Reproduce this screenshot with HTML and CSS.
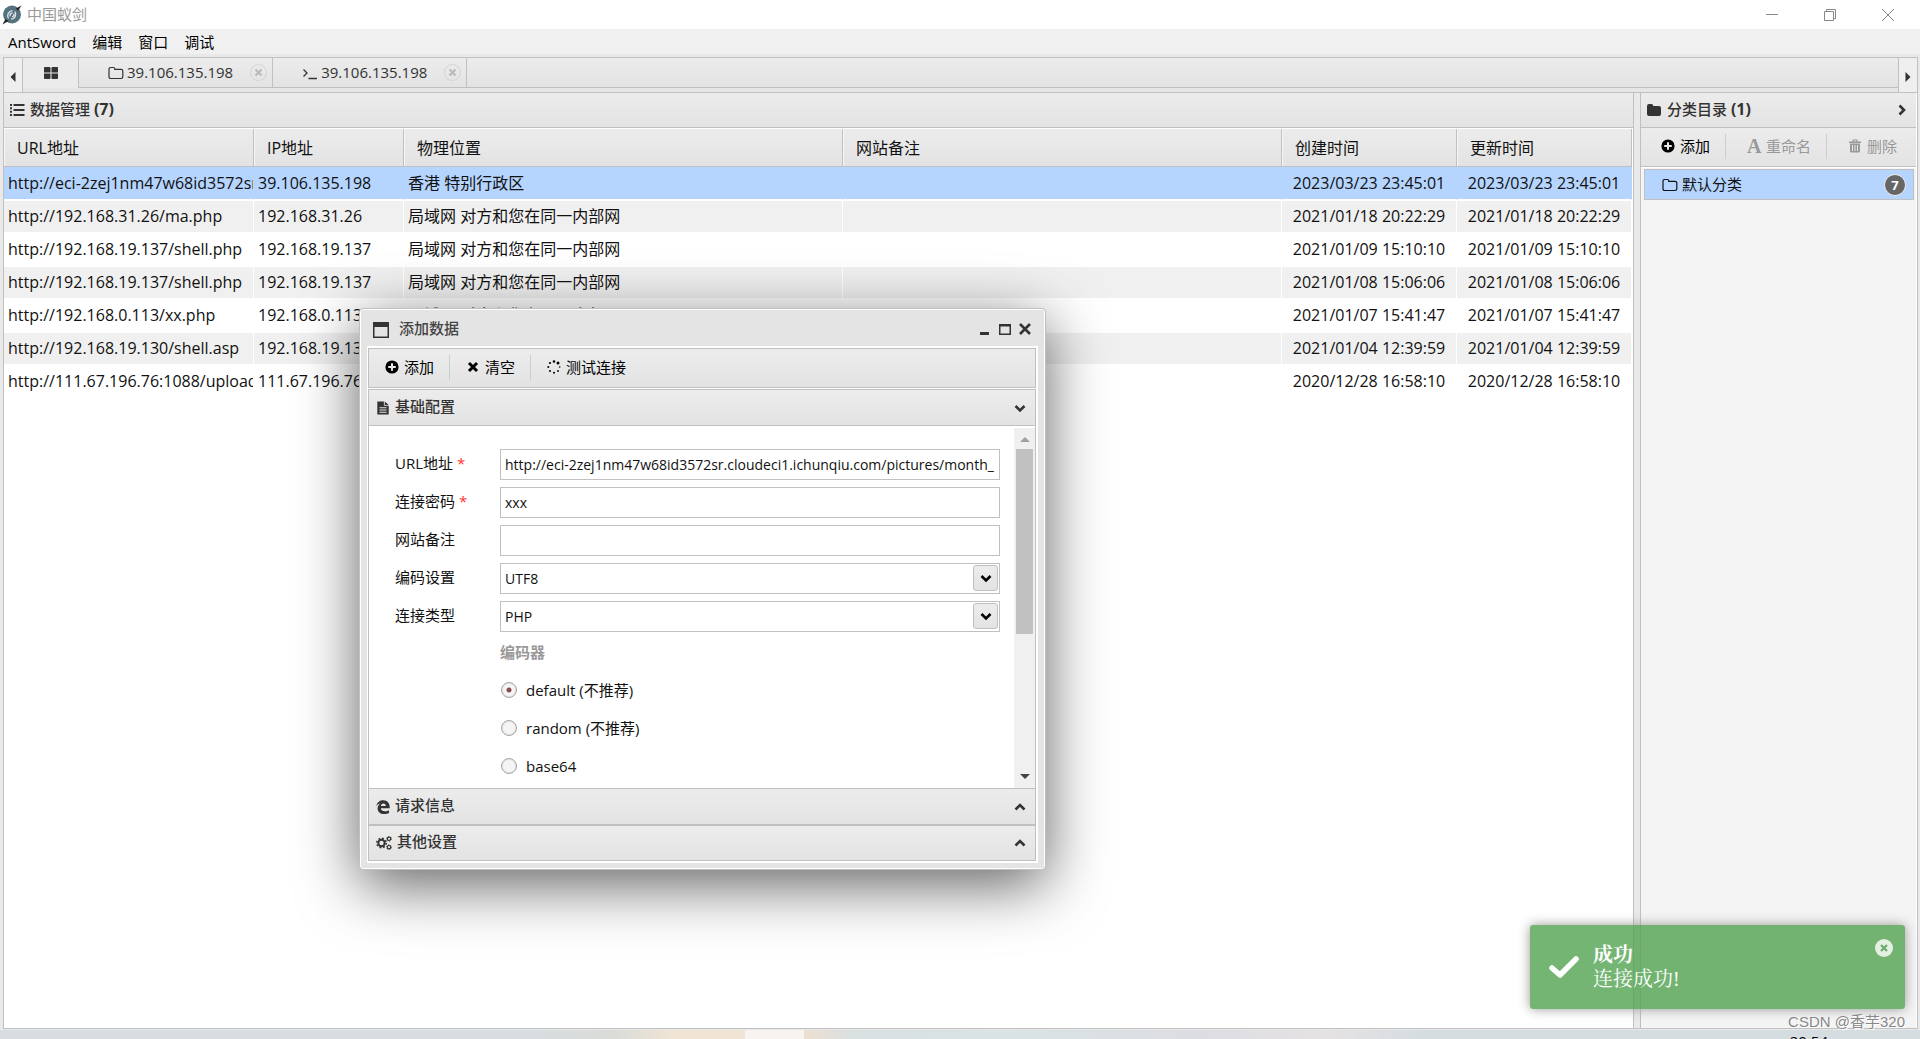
FILE: index.html
```html
<!DOCTYPE html>
<html lang="zh-CN">
<head>
<meta charset="utf-8">
<meta name="viewport" content="width=device-width, initial-scale=1">
<title>中国蚁剑</title>
<link rel="stylesheet" href="styles.css">
</head>
<body>
<svg class="sprite" aria-hidden="true">
  <symbol id="i-folder-o" viewBox="0 0 16 14"><path d="M1 3.2Q1 1.5 2.7 1.5H5.3Q6.8 1.5 6.8 3V3.3H13Q14.8 3.3 14.8 5V10.8Q14.8 12.5 13 12.5H2.7Q1 12.5 1 10.8Z" fill="none" stroke="currentColor" stroke-width="1.2"/></symbol>
  <symbol id="i-folder" viewBox="0 0 16 14"><path d="M1 3Q1 1 3 1H5.3Q7.3 1 7.3 3H13Q15 3 15 5V11Q15 13 13 13H3Q1 13 1 11Z"/></symbol>
  <symbol id="i-plus" viewBox="0 0 14 14"><path fill-rule="evenodd" d="M7 .4A6.6 6.6 0 1 0 7 13.600A6.600 6.600 0 1 0 7 .4ZM6 3.200H8V6H10.800V8H8V10.800H6V8H3.200V6H6Z"/></symbol>
  <symbol id="i-times" viewBox="0 0 12 12"><path d="M2 2L10 10M10 2L2 10" fill="none" stroke="currentColor" stroke-width="3"/></symbol>
  <symbol id="i-down" viewBox="0 0 12 12"><path d="M1.500 4L6 8.500L10.500 4" fill="none" stroke="currentColor" stroke-width="2.600"/></symbol>
  <symbol id="i-up" viewBox="0 0 12 12"><path d="M1.500 8.500L6 4L10.500 8.500" fill="none" stroke="currentColor" stroke-width="2.600"/></symbol>
  <symbol id="i-right" viewBox="0 0 12 12"><path d="M3.500 1.500L8 6L3.500 10.500" fill="none" stroke="currentColor" stroke-width="2.600"/></symbol>
</svg>

<header class="titlebar">
  <svg class="logo" viewBox="0 0 20 20"><circle cx="10" cy="9.500" r="9" fill="#56727f"/><path d="M6.500 13.500C4.500 10 6.500 6 10.500 5.600M12.800 6.500C15 10 12.800 14 9 14.200M8.400 11.400C7.400 9.500 8.700 8 10.600 8.200M11.800 8.800C12.400 10.400 11.500 11.600 10 11.700" fill="none" stroke="#dfe8ec" stroke-width="1.300"/><path d="M.5 19.500L3.500 14L6.500 16ZM19.500 .5L14 3.500L16 6Z" fill="#222"/></svg>
  <h1 class="app-name">中国蚁剑</h1>
  <div class="win-controls">
    <button aria-label="最小化"><svg viewBox="0 0 14 14"><path d="M1 6.500H13"/></svg></button>
    <button aria-label="还原"><svg viewBox="0 0 14 14"><path d="M1.500 3.500H10.500V12.500H1.500ZM3.500 3.500V1.500H12.500V10.500H10.500"/></svg></button>
    <button aria-label="关闭"><svg viewBox="0 0 14 14"><path d="M1 1L13 13M13 1L1 13"/></svg></button>
  </div>
</header>

<nav class="menubar">
  <button>AntSword</button><button>编辑</button><button>窗口</button><button>调试</button>
</nav>

<div class="app">
  <div class="tabbar">
    <button class="tab-arrow" aria-label="向左"><svg viewBox="0 0 6 10"><path d="M5.500 0V10L.5 5Z"/></svg></button>
    <button class="tab tab-home" aria-label="主页"><svg viewBox="0 0 14 12"><path d="M1 0H5.500Q6.500 0 6.500 1V5.500H0V1Q0 0 1 0ZM8.500 0H13Q14 0 14 1V5.500H7.500V1Q7.500 0 8.500 0ZM0 6.500H6.500V11Q6.500 12 5.500 12H1Q0 12 0 11ZM7.500 6.500H14V11Q14 12 13 12H8.500Q7.500 12 7.500 11Z"/></svg></button>
    <div class="tab"><svg class="ic16"><use href="#i-folder-o"/></svg><span>39.106.135.198</span><button class="tab-close" aria-label="关闭标签"><svg><use href="#i-times"/></svg></button></div>
    <div class="tab"><svg class="ic16" viewBox="0 0 16 14"><path d="M1.500 3.500L5 7L1.500 10.500M6.500 12.500H15" fill="none" stroke="currentColor" stroke-width="1.300"/></svg><span>39.106.135.198</span><button class="tab-close" aria-label="关闭标签"><svg><use href="#i-times"/></svg></button></div>
    <div class="tab-fill"></div>
    <button class="tab-arrow tab-arrow-end" aria-label="向右"><svg viewBox="0 0 6 10"><path d="M.5 0V10L5.500 5Z"/></svg></button>
  </div>

  <div class="panes">
    <main class="pane">
      <h2 class="pane-head"><svg class="ic16" viewBox="0 0 16 14"><path d="M1 1H3V3H1ZM1 4.300H3V6.300H1ZM1 7.700H3V9.700H1ZM1 11H3V13H1ZM4.500 1H15.500V3H4.500ZM4.500 6H15.500V8H4.500ZM4.500 11H15.500V13H4.500Z"/></svg><span>数据管理 <b>(7)</b></span></h2>
      <div class="grid">
        <table>
          <colgroup><col class="c-url"><col class="c-ip"><col><col><col class="c-time"><col class="c-time"></colgroup>
          <thead><tr><th>URL地址</th><th>IP地址</th><th>物理位置</th><th>网站备注</th><th>创建时间</th><th>更新时间</th></tr></thead>
          <tbody>
            <tr class="selected"><td>http://eci-2zej1nm47w68id3572sr.cloudeci1.ichunqiu.com</td><td>39.106.135.198</td><td>香港 特别行政区</td><td></td><td>2023/03/23 23:45:01</td><td>2023/03/23 23:45:01</td></tr>
            <tr><td>http://192.168.31.26/ma.php</td><td>192.168.31.26</td><td>局域网 对方和您在同一内部网</td><td></td><td>2021/01/18 20:22:29</td><td>2021/01/18 20:22:29</td></tr>
            <tr><td>http://192.168.19.137/shell.php</td><td>192.168.19.137</td><td>局域网 对方和您在同一内部网</td><td></td><td>2021/01/09 15:10:10</td><td>2021/01/09 15:10:10</td></tr>
            <tr><td>http://192.168.19.137/shell.php</td><td>192.168.19.137</td><td>局域网 对方和您在同一内部网</td><td></td><td>2021/01/08 15:06:06</td><td>2021/01/08 15:06:06</td></tr>
            <tr><td>http://192.168.0.113/xx.php</td><td>192.168.0.113</td><td>局域网 对方和您在同一内部网</td><td></td><td>2021/01/07 15:41:47</td><td>2021/01/07 15:41:47</td></tr>
            <tr><td>http://192.168.19.130/shell.asp</td><td>192.168.19.130</td><td></td><td></td><td>2021/01/04 12:39:59</td><td>2021/01/04 12:39:59</td></tr>
            <tr><td>http://111.67.196.76:1088/upload</td><td>111.67.196.76</td><td></td><td></td><td>2020/12/28 16:58:10</td><td>2020/12/28 16:58:10</td></tr>
          </tbody>
        </table>
      </div>
    </main>

    <aside class="pane side">
      <h2 class="pane-head"><svg class="ic16"><use href="#i-folder"/></svg><span>分类目录 <b>(1)</b></span><svg class="chev"><use href="#i-right"/></svg></h2>
      <div class="toolbar side-tools">
        <button><svg class="ic14"><use href="#i-plus"/></svg>添加</button>
        <button disabled><b class="font-icon">A</b>重命名</button>
        <button disabled><svg class="ic14" viewBox="0 0 14 14"><path fill-rule="evenodd" d="M1 2.500H4L5 .5H9L10 2.500H13V4H1ZM5.500 2.500H8.500L8 1.500H6ZM2 4.500H12V12Q12 13.500 10.500 13.500H3.500Q2 13.500 2 12ZM4 6V12H5V6ZM6.500 6V12H7.500V6ZM9 6V12H10V6Z"/></svg>删除</button>
      </div>
      <ul class="cats">
        <li><svg class="ic16"><use href="#i-folder-o"/></svg><span>默认分类</span><b class="badge">7</b></li>
      </ul>
    </aside>
  </div>
</div>

<footer class="desktop"><span>20:54</span></footer>

<section class="dialog" aria-label="添加数据">
  <div class="dlg-head">
    <svg class="ic16" viewBox="0 0 16 16"><path fill-rule="evenodd" d="M0 0H16V16H0ZM1.500 5V14.500H14.500V5Z"/></svg>
    <h2>添加数据</h2>
    <button aria-label="最小化"><svg viewBox="0 0 12 12"><path d="M1 9H10V12H1Z"/></svg></button>
    <button aria-label="最大化"><svg viewBox="0 0 12 12"><path fill-rule="evenodd" d="M0 1H12V12H0ZM1.500 3.500V10.500H10.500V3.500Z"/></svg></button>
    <button aria-label="关闭"><svg viewBox="0 0 12 12"><path d="M1 1L11 11M11 1L1 11" stroke="currentColor" stroke-width="2.600"/></svg></button>
  </div>
  <div class="dlg-body">
    <div class="toolbar dlg-tools">
      <button><svg class="ic14"><use href="#i-plus"/></svg>添加</button>
      <button><svg class="ic14" viewBox="0 0 14 14"><path d="M3 3L11 11M11 3L3 11" stroke="currentColor" stroke-width="3"/></svg>清空</button>
      <button><svg class="ic14" viewBox="0 0 14 14"><circle cx="7" cy="1.500" r="1.300"/><circle cx="11" cy="3" r="1.500"/><circle cx="12.700" cy="7" r=".8"/><circle cx="11" cy="11" r=".9"/><circle cx="7" cy="12.700" r="1"/><circle cx="3" cy="11" r="1"/><circle cx="1.300" cy="7" r="1"/><circle cx="3" cy="3" r="1.100"/></svg>测试连接</button>
    </div>
    <div class="accordion">
      <h3><svg class="ic14" viewBox="0 0 14 16"><path fill-rule="evenodd" d="M.5 .5H8V5.500H13.500V15.500H.5ZM9 .5L13.500 4.500H9ZM3 7V8.200H11V7ZM3 9.700V10.900H11V9.700ZM3 12.300V13.500H11V12.300Z"/></svg><span>基础配置</span><svg class="chev"><use href="#i-down"/></svg></h3>
      <div class="scroll">
        <form class="form">
          <div class="field"><label for="url">URL地址 <i>*</i></label><input id="url" type="text" value="http://eci-2zej1nm47w68id3572sr.cloudeci1.ichunqiu.com/pictures/month_"></div>
          <div class="field"><label for="pwd">连接密码 <i>*</i></label><input id="pwd" type="text" value="xxx"></div>
          <div class="field"><label for="note">网站备注</label><input id="note" type="text"></div>
          <div class="field"><label for="enc">编码设置</label><span class="combo"><select id="enc"><option>UTF8</option></select><span class="combo-btn"><svg><use href="#i-down"/></svg></span></span></div>
          <div class="field"><label for="type">连接类型</label><span class="combo"><select id="type"><option>PHP</option></select><span class="combo-btn"><svg><use href="#i-down"/></svg></span></span></div>
          <fieldset>
            <legend>编码器</legend>
            <label><input type="radio" name="encoder" checked>default (不推荐)</label>
            <label><input type="radio" name="encoder">random (不推荐)</label>
            <label><input type="radio" name="encoder">base64</label>
          </fieldset>
        </form>
        <div class="scrollbar" aria-hidden="true"><i class="arrow-up"></i><i class="thumb"></i><i class="arrow-down"></i></div>
      </div>
      <h3><svg class="ic14" viewBox="0 0 14 14"><path d="M.3 6.200C1 2 4 .2 7.300 .2C11.500 .2 13.700 3.200 13.700 6.800V8.300H4.800C5 10.500 6.800 11.300 8.800 11.300C10.600 11.300 11.800 10.900 13 10.200V13C11.700 13.700 10 14 8.200 14C4.300 14 1.600 11.800 1.600 8.400C1.600 6.200 2.800 4.500 4.600 3.600C2.800 3.800 1.300 4.700 .3 6.200ZM4.900 5.900H9.800C9.800 4.300 8.900 3.400 7.500 3.400C6 3.400 5.100 4.400 4.900 5.900Z"/></svg><span>请求信息</span><svg class="chev"><use href="#i-up"/></svg></h3>
      <h3><svg class="ic16" viewBox="0 0 16 14"><circle cx="5.500" cy="7" r="3.200" fill="none" stroke="currentColor" stroke-width="2"/><circle cx="5.500" cy="7" r="4.700" fill="none" stroke="currentColor" stroke-width="1.500" stroke-dasharray="1.850 1.840"/><circle cx="13" cy="2.800" r="1.700" fill="none" stroke="currentColor" stroke-width="1.200"/><circle cx="13" cy="2.800" r="2.500" fill="none" stroke="currentColor" stroke-width=".8" stroke-dasharray="1.300 1.310"/><circle cx="13" cy="11.200" r="1.700" fill="none" stroke="currentColor" stroke-width="1.200"/><circle cx="13" cy="11.200" r="2.500" fill="none" stroke="currentColor" stroke-width=".8" stroke-dasharray="1.300 1.310"/></svg><span>其他设置</span><svg class="chev"><use href="#i-up"/></svg></h3>
    </div>
  </div>
</section>

<div class="toast" role="status">
  <svg class="check" viewBox="0 0 30 24"><path d="M3 13L11 20L27 4" fill="none" stroke="#fff" stroke-width="5.500" stroke-linecap="round" stroke-linejoin="round"/></svg>
  <div class="toast-text"><b>成功</b><span>连接成功!</span></div>
  <button aria-label="关闭通知"><svg viewBox="0 0 18 18"><circle cx="9" cy="9" r="9" fill="#e3f0e3"/><path d="M6 6L12 12M12 6L6 12" stroke="#6bac6b" stroke-width="2.200"/></svg></button>
</div>
<span class="watermark">CSDN @香芋320</span>
</body>
</html>
```
FILE: styles.css
```css
:root {
  --line: #c0c0c0;
  --bar: linear-gradient(#ececec, #e3e3e3);
  --sel: #b5d5ff;
  --ink: #333;
}
* { box-sizing: border-box; }
body {
  margin: 0;
  height: 100vh;
  display: flex;
  flex-direction: column;
  overflow: hidden;
  position: relative;
  background: #e9e9e9;
  color: #111;
  font: 15px/20px "Open Sans", "Noto Sans CJK SC", sans-serif;
}
h1, h2, h3, ul { margin: 0; padding: 0; font-size: inherit; }
ul { list-style: none; }
svg { display: block; flex: none; fill: currentColor; }
button { border: 0; padding: 0; background: none; font: inherit; color: inherit; }
.sprite { position: absolute; width: 0; height: 0; }
.ic16 { width: 16px; height: 14px; }
.ic14 { width: 14px; height: 14px; }
.chev { width: 12px; height: 12px; margin-left: auto; color: var(--ink); }

.titlebar { display: flex; align-items: center; height: 29px; padding-left: 2px; background: #fff; }
.logo { width: 20px; height: 20px; }
.app-name { margin-left: 5px; padding-bottom: 2px; font-weight: 400; color: #999; }
.win-controls { display: flex; margin-left: auto; margin-right: 3px; }
.win-controls button { width: 58px; height: 29px; display: grid; place-items: center; }
.win-controls svg { width: 14px; height: 14px; fill: none; stroke: #888; stroke-width: 1; }

.menubar { display: flex; gap: 16px; align-items: center; height: 25px; padding: 0 0 0 8px; background: #f0f0f0; color: #000; }

.app { flex: 1; min-height: 0; display: flex; flex-direction: column; margin: 3px 2px 0 3px; border: 1px solid var(--line); }
.tabbar { display: flex; height: 35px; border-bottom: 1px solid var(--line); background: #e6e6e6; }
.tab-arrow { width: 19px; display: grid; place-items: center; padding-top: 4px; background: #efefef; border-right: 1px solid var(--line); color: var(--ink); }
.tab-arrow-end { border-right: 0; border-left: 1px solid var(--line); }
.tab-arrow svg { width: 6px; height: 10px; }
.tab { display: flex; align-items: center; height: 30px; padding: 0 5px 0 29px; border-right: 1px solid var(--line); border-bottom: 1px solid var(--line); background: var(--bar); color: var(--ink); }
.tab span { margin: 0 17px 0 3px; padding-bottom: 2px; }
.tab-home { width: 56px; justify-content: center; padding: 0; border-bottom: 0; background: #ebebeb; }
.tab-home svg { width: 14px; height: 12px; }
.tab-close { width: 17px; height: 17px; display: grid; place-items: center; border: 1px solid #d4d4d4; border-radius: 50%; color: #bbb; }
.tab-close svg { width: 9px; height: 9px; }
.tab-fill { flex: 1; height: 30px; border-bottom: 1px solid var(--line); background: var(--bar); }

.panes { flex: 1; min-height: 0; display: flex; gap: 6px; }
.pane { flex: 1; min-width: 0; display: flex; flex-direction: column; border-right: 1px solid var(--line); background: #fff; }
.side { flex: 0 0 277px; border-left: 1px solid var(--line); border-right: 1px solid #fff; background: #f4f4f4; }
.pane-head { display: flex; align-items: center; gap: 5px; height: 35px; flex: none; padding: 0 8px 0 5px; border-bottom: 1px solid var(--line); background: var(--bar); color: var(--ink); font-weight: 500; }
.pane-head span { padding-bottom: 2px; }
.pane-head b { font-size: 16px; font-weight: 700; }
.grid { flex: 1; padding: 1px 1px 0 0; overflow: hidden; }
table { width: 100%; table-layout: fixed; border-collapse: separate; border-spacing: 0; font-size: 16px; }
.c-url { width: 250px; }
.c-ip { width: 150px; }
.c-time { width: 175px; }
th { height: 38px; padding: 0 13px; text-align: left; font-weight: 400; background: var(--bar); border-right: 1px solid var(--line); border-bottom: 1px solid var(--line); box-shadow: inset 1px 0 #f6f6f6; }
td { height: 33px; padding: 0 0 0 4px; line-height: 31px; white-space: nowrap; overflow: hidden; border: solid #fff; border-width: 1px 1px 1px 0; }
td:nth-child(n+5) { padding: 0; text-align: center; }
tr:nth-child(even) td { background: #f0f0f0; }
tr.selected td { background: var(--sel); border-color: var(--sel); border-bottom-color: #fff; }

.toolbar { display: flex; align-items: center; flex: none; background: var(--bar); color: #000; }
.toolbar button { display: flex; align-items: center; gap: 5px; height: 25px; padding: 0 15px; border-right: 1px solid #c3d0d8; white-space: nowrap; }
.toolbar button:last-child { border-right: 0; }
.toolbar button:disabled { color: #999; }
.side-tools { height: 39px; padding: 0 0 2px 5px; border-bottom: 1px solid var(--line); }
.side-tools button + button { padding: 0 15px 0 21px; }
.font-icon { width: 14px; font: bold 20px/20px "Liberation Serif", serif; }
.cats { border-top: 1px solid #fff; padding: 1px 2px 1px 3px; }
.cats li { display: flex; align-items: center; gap: 4px; height: 31px; padding: 0 7px 0 17px; background: var(--sel); border: 1px solid var(--line); }
.cats span { padding-bottom: 2px; }
.badge { display: grid; place-items: center; width: 22px; height: 22px; margin-left: auto; border: 1px solid #eee; border-radius: 50%; background: #666; color: #fff; font-size: 13px; line-height: 16px; }

.desktop { height: 9px; flex: none; margin-top: 1px; padding-right: 92px; overflow: hidden; text-align: right; color: #000; line-height: 22px;
  background: linear-gradient(90deg, #d7dde0 0 28%, #dadcd8 32%, #f0e4d4 35% 38.8%, #f7f3f0 38.8% 41.9%, #ecdfd0 41.9%, #d9e0e2 44.500%, #d9e3e4 52%, #dddde2 63%, #e6e2e4 69%, #d6dde1 74%); }

.dialog { position: absolute; left: 359px; top: 308px; width: 687px; display: flex; flex-direction: column; padding: 0 7px 6px; border: 1px solid var(--line); border-radius: 4px; background: #e4e4e4; box-shadow: inset 0 0 0 1px #fff, 0 15px 60px rgba(0, 0, 0, .62); }
.dlg-head { display: flex; align-items: center; gap: 8px; height: 37px; padding: 5px 7px 0 6px; color: var(--ink); }
.dlg-head .ic16 { height: 16px; }
.dlg-head h2 { flex: 1; font-weight: 500; color: #444; margin-left: 2px; padding-bottom: 4px; }
.dlg-head button { margin-bottom: 2px; }
.dlg-head button svg { width: 12px; height: 12px; }
.dlg-body { border: 2px solid #fff; border-left-width: 1px; background: #fff; display: flex; flex-direction: column; gap: 1px; }
.dlg-tools { height: 40px; padding-bottom: 2px; border: 1px solid var(--line); }
.dlg-tools button { padding: 0 15px 0 16px; }
.accordion { border: 1px solid var(--line); }
.accordion h3 { display: flex; align-items: center; gap: 5px; height: 36px; padding: 0 9px 0 7px; background: var(--bar); border-bottom: 1px solid var(--line); font-weight: 500; color: var(--ink); }
.accordion h3 span { padding-bottom: 4px; }
.accordion h3:last-child { height: 35px; border-bottom: 0; border-top: 1px solid var(--line); }
.scroll { display: flex; height: 363px; overflow: hidden; border-bottom: 1px solid var(--line); padding-top: 2px; }
.form { flex: 1; padding: 21px 14px 0 26px; }
.field { display: flex; height: 31px; margin-bottom: 7px; }
.field label { width: 105px; line-height: 28px; }
.field i { color: #f33; font-style: normal; }
.field input, .combo { flex: 1; min-width: 0; }
.field input, .field select { height: 31px; padding: 0 4px; border: 1px solid var(--line); border-radius: 0; background: #fff; color: #111; font: inherit; font-size: 14px; }
.combo { position: relative; display: flex; }
.combo select { flex: 1; appearance: none; }
.combo-btn { position: absolute; right: 2px; top: 2px; width: 25px; height: 26px; display: grid; place-items: center; border: 1px solid var(--line); border-radius: 3px; background: var(--bar); pointer-events: none; color: #000; }
.combo-btn svg { width: 12px; height: 12px; }
fieldset { margin: 0 0 0 105px; padding: 0; border: 0; }
legend { padding: 0; height: 32px; line-height: 27px; font-weight: 600; color: #999; }
fieldset label { display: flex; align-items: center; gap: 9px; height: 38px; }
fieldset input { appearance: none; width: 16px; height: 16px; margin: 0 0 0 1px; border: 1px solid #a5a5a5; border-radius: 50%; background: #f5f5f5; box-shadow: inset 0 0 0 1px #e6e2e2; }
fieldset input:checked { background: radial-gradient(circle, #8a4a4a 2px, #f5f5f5 3px); }
.scrollbar { width: 21px; display: flex; flex-direction: column; align-items: center; background: #f0f0f0; }
.arrow-up, .arrow-down { border: 5px solid transparent; }
.arrow-up { border-top: 0; border-bottom-color: #a0a0a0; margin: 9px 0 7px; }
.arrow-down { border-bottom: 0; border-top-color: #444; margin: auto 0 9px; }
.thumb { width: 17px; height: 185px; background: #c1c1c1; }

.toast { position: absolute; right: 15px; bottom: 30px; width: 375px; height: 84px; display: flex; align-items: center; gap: 14px; padding: 0 12px 0 19px; border-radius: 3px; background: rgba(81, 163, 81, .8); box-shadow: 0 0 12px #999; color: #fff; font: 20px/24px "Liberation Serif", "Noto Serif CJK SC", "Noto Sans CJK SC", serif; }
.check { width: 30px; height: 24px; }
.toast-text { flex: 1; display: flex; flex-direction: column; }
.toast button { align-self: flex-start; margin-top: 14px; }
.toast button svg { width: 18px; height: 18px; }
.watermark { position: absolute; right: 15px; bottom: 7px; font-size: 15px; color: #888; text-shadow: 1px 1px #fff; font-family: "Liberation Sans", "Noto Sans CJK SC", sans-serif; }
```
